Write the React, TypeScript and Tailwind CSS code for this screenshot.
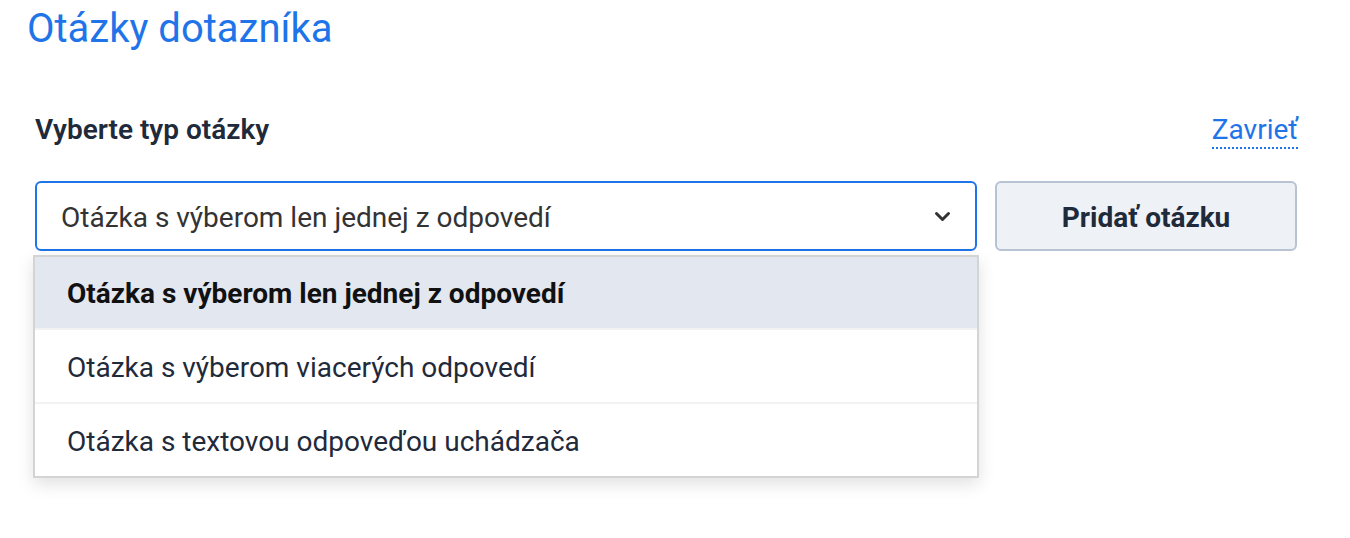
import React from "react";

export default function App() {
  const options = [
    "Otázka s výberom len jednej z odpovedí",
    "Otázka s výberom viacerých odpovedí",
    "Otázka s textovou odpoveďou uchádzača",
  ];
  return (
    <div className="w-[1350px] h-[538px] bg-white font-['Roboto',sans-serif] relative">
      <div className="pl-[27px] pt-[5px]">
        <h1 className="text-[40px] leading-[48px] text-[#1e74e8] font-normal">Otázky dotazníka</h1>
      </div>
      <div className="pl-[35px] pr-[52px] pt-[61px]">
        <div className="flex items-start justify-between">
          <span className="text-[28px] leading-[32px] font-semibold text-[#1f2a3a]">Vyberte typ otázky</span>
          <span className="text-[28px] leading-[32px] pb-[1px] text-[#1e74e8] border-b-2 border-dotted border-[#1e74e8]">Zavrieť</span>
        </div>
        <div className="flex gap-[18px] mt-[32px]">
          <div className="relative w-[942px]">
            <div className="h-[70px] border-2 border-[#1e74e8] rounded-[6px] flex items-center justify-between pl-[24px] pr-[24px]">
              <span className="text-[28px] leading-[32px] pt-[4px] text-[#333333]">{options[0]}</span>
              <svg width="17" height="11" viewBox="0 0 17 11" fill="none" stroke="#333" strokeWidth="3" strokeLinecap="round" strokeLinejoin="round">
                <path d="M2.5 2.5l6 6 6-6" />
              </svg>
            </div>
            <div className="absolute left-[-2px] top-[74px] w-[946px] bg-white border-2 border-[#d4d4d4] shadow-[0_6px_16px_rgba(0,0,0,0.12)]">
              <div className="h-[71px] bg-[#e3e7f0] flex items-center pl-[32px] pt-[3px] text-[28px] font-bold text-[#111]">{options[0]}</div>
              <div className="h-[2px] bg-[#f2f2f2]" />
              <div className="h-[72px] flex items-center pl-[32px] pt-[3px] text-[28px] text-[#1f2a3a]">{options[1]}</div>
              <div className="h-[2px] bg-[#f2f2f2]" />
              <div className="h-[72px] flex items-center pl-[32px] pt-[3px] text-[28px] text-[#1f2a3a]">{options[2]}</div>
            </div>
          </div>
          <button className="w-[302px] h-[70px] pt-[4px] bg-[#eef1f6] border-2 border-[#b7c2d2] rounded-[6px] text-[28px] leading-[32px] font-bold text-[#1f2a3a]">
            Pridať otázku
          </button>
        </div>
      </div>
    </div>
  );
}
